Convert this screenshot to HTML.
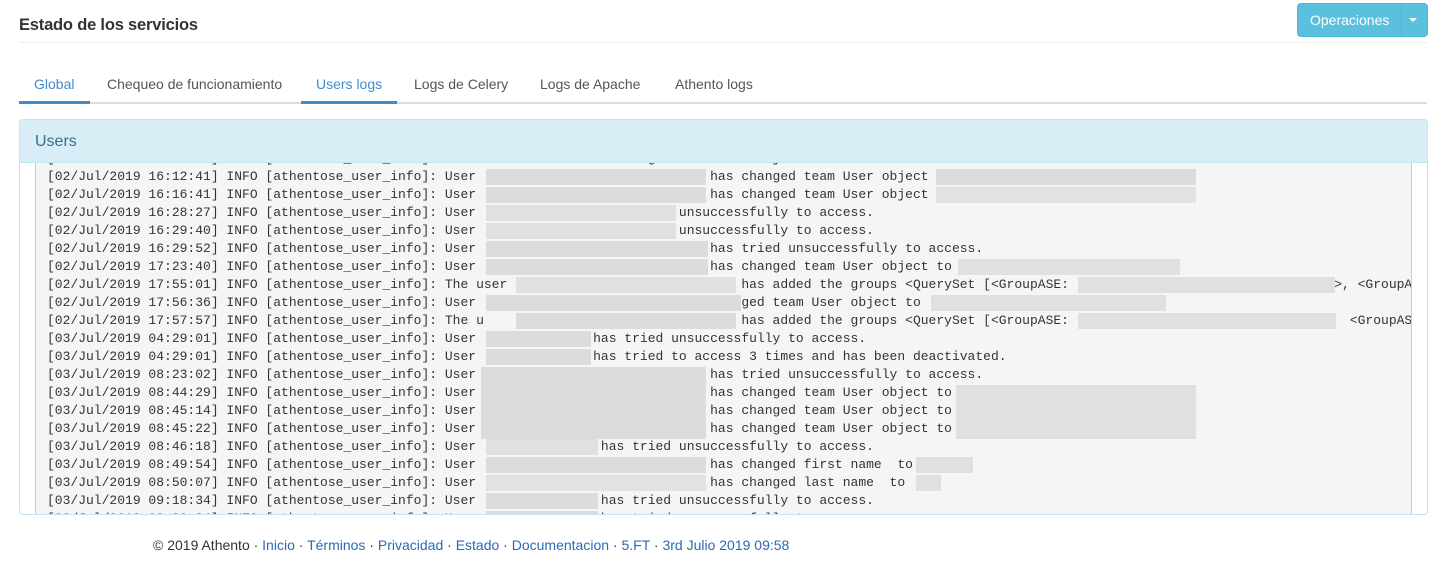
<!DOCTYPE html>
<html><head><meta charset="utf-8"><style>
*{margin:0;padding:0;box-sizing:border-box}
body{width:1449px;height:566px;background:#fff;font-family:"Liberation Sans",sans-serif;color:#333;position:relative;overflow:hidden}
.title{position:absolute;left:19px;top:16px;font-size:16.5px;font-weight:bold;color:#333;letter-spacing:-0.2px}
.hr{position:absolute;left:19px;top:42px;width:1408px;height:1px;background:#eee}
.btn{position:absolute;left:1297px;top:3px;width:131px;height:34px;background:#5bc0de;border:1px solid #46b8da;border-radius:4px;color:#fff;font-size:14px}
.btn .l{position:absolute;left:12px;top:8px}
.btn .sep{position:absolute;left:103px;top:0;width:1px;height:32px;background:#46b8da}
.btn .car{position:absolute;left:111px;top:14px;width:0;height:0;border-left:4px solid transparent;border-right:4px solid transparent;border-top:4px solid #fff}
.tabs{position:absolute;left:19px;top:102px;width:1408px;height:2px;background:#ddd}
.tab{position:absolute;top:76px;font-size:14px;color:#555}
.tab.a{color:#428bca}
.ul{position:absolute;top:101px;height:3px;background:#428bca}
.panel{position:absolute;left:19px;top:119px;width:1409px;height:396px;border:1px solid #bce8f1;border-radius:4px;overflow:hidden}
.ph{position:absolute;left:0;top:0;width:100%;height:43px;background:#d9edf7;border-bottom:1px solid #bce8f1}
.ph span{position:absolute;left:15px;top:13px;font-size:16px;color:#31708f}
.pre{position:absolute;left:15px;top:43px;width:1377px;height:352px;background:#f5f5f5;border-left:1px solid #ccc;border-right:1px solid #ccc;overflow:hidden}
.txt{position:absolute;left:11px;top:-13px;font-family:"Liberation Mono",monospace;font-size:13px;line-height:18px;color:#333;white-space:pre}
.r{position:absolute;background:#dcdcdc;height:16px}
.foot{position:absolute;left:153px;top:537px;font-size:14px;color:#333}
.foot a{color:#2a6ab5;text-decoration:none}
</style></head><body>
<div class="title">Estado de los servicios</div>
<div class="hr"></div>
<div class="btn"><span class="l">Operaciones</span><span class="sep"></span><span class="car"></span></div>
<div class="tabs"></div>
<div class="ul" style="left:19px;width:71px"></div>
<div class="ul" style="left:301px;width:96px"></div>
<div class="tab a" style="left:34px">Global</div>
<div class="tab" style="left:107px">Chequeo de funcionamiento</div>
<div class="tab a" style="left:316px">Users logs</div>
<div class="tab" style="left:414px">Logs de Celery</div>
<div class="tab" style="left:540px">Logs de Apache</div>
<div class="tab" style="left:675px">Athento logs</div>
<div class="panel">
<div class="ph"><span>Users</span></div>
<div class="pre">
<div class="txt">[02/Jul/2019 16:10:41] INFO [athentose_user_info]: User xxxxxxxxxxxx has changed team User object
[02/Jul/2019 16:12:41] INFO [athentose_user_info]: User                              has changed team User object
[02/Jul/2019 16:16:41] INFO [athentose_user_info]: User                              has changed team User object
[02/Jul/2019 16:28:27] INFO [athentose_user_info]: User                          unsuccessfully to access.
[02/Jul/2019 16:29:40] INFO [athentose_user_info]: User                          unsuccessfully to access.
[02/Jul/2019 16:29:52] INFO [athentose_user_info]: User                              has tried unsuccessfully to access.
[02/Jul/2019 17:23:40] INFO [athentose_user_info]: User                              has changed team User object to
[02/Jul/2019 17:55:01] INFO [athentose_user_info]: The user                              has added the groups &lt;QuerySet [&lt;GroupASE:                                  &gt;, &lt;GroupASE
[02/Jul/2019 17:56:36] INFO [athentose_user_info]: User                                  ged team User object to
[02/Jul/2019 17:57:57] INFO [athentose_user_info]: The u                                 has added the groups &lt;QuerySet [&lt;GroupASE:                                    &lt;GroupASE
[03/Jul/2019 04:29:01] INFO [athentose_user_info]: User               has tried unsuccessfully to access.
[03/Jul/2019 04:29:01] INFO [athentose_user_info]: User               has tried to access 3 times and has been deactivated.
[03/Jul/2019 08:23:02] INFO [athentose_user_info]: User                              has tried unsuccessfully to access.
[03/Jul/2019 08:44:29] INFO [athentose_user_info]: User                              has changed team User object to
[03/Jul/2019 08:45:14] INFO [athentose_user_info]: User                              has changed team User object to
[03/Jul/2019 08:45:22] INFO [athentose_user_info]: User                              has changed team User object to
[03/Jul/2019 08:46:18] INFO [athentose_user_info]: User                has tried unsuccessfully to access.
[03/Jul/2019 08:49:54] INFO [athentose_user_info]: User                              has changed first name  to
[03/Jul/2019 08:50:07] INFO [athentose_user_info]: User                              has changed last name  to
[03/Jul/2019 09:18:34] INFO [athentose_user_info]: User                has tried unsuccessfully to access.
[03/Jul/2019 09:20:34] INFO [athentose_user_info]: User                has tried unsuccessfully to access.</div>
<div class="r" style="left:450px;top:6px;width:220px"></div><div class="r" style="left:900px;top:6px;width:260px"></div>
<div class="r" style="left:450px;top:24px;width:220px"></div><div class="r" style="left:900px;top:24px;width:260px;background:#e2e2e2"></div>
<div class="r" style="left:450px;top:42px;width:190px;background:#e0e0e0"></div>
<div class="r" style="left:450px;top:60px;width:190px;background:#e0e0e0"></div>
<div class="r" style="left:450px;top:78px;width:222px"></div>
<div class="r" style="left:450px;top:96px;width:222px"></div><div class="r" style="left:922px;top:96px;width:222px;background:#e0e0e0"></div>
<div class="r" style="left:480px;top:114px;width:220px;background:#e0e0e0"></div><div class="r" style="left:1042px;top:114px;width:257px;background:#e0e0e0"></div>
<div class="r" style="left:450px;top:132px;width:255px"></div><div class="r" style="left:895px;top:132px;width:235px;background:#e0e0e0"></div>
<div class="r" style="left:480px;top:150px;width:220px"></div><div class="r" style="left:1042px;top:150px;width:258px;background:#e0e0e0"></div>
<div class="r" style="left:450px;top:168px;width:105px"></div>
<div class="r" style="left:450px;top:186px;width:105px"></div>
<div class="r" style="left:445px;top:204px;width:225px;height:72px"></div>
<div class="r" style="left:920px;top:222px;width:240px;height:54px;background:#e0e0e0"></div>
<div class="r" style="left:450px;top:276px;width:112px;background:#e0e0e0"></div>
<div class="r" style="left:450px;top:294px;width:220px"></div><div class="r" style="left:880px;top:294px;width:57px;background:#e0e0e0"></div>
<div class="r" style="left:450px;top:312px;width:220px;background:#e2e2e2"></div><div class="r" style="left:880px;top:312px;width:25px;background:#e0e0e0"></div>
<div class="r" style="left:450px;top:330px;width:112px"></div>
<div class="r" style="left:450px;top:348px;width:112px"></div>
</div>
</div>
<div class="foot">© 2019 Athento · <a>Inicio</a> · <a>Términos</a> · <a>Privacidad</a> · <a>Estado</a> · <a>Documentacion</a> · <a>5.FT</a> · <a>3rd Julio 2019 09:58</a></div>
</body></html>
